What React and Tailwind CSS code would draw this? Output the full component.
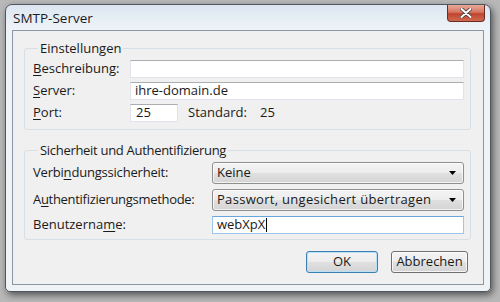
import React from 'react';

const font = { fontFamily: '"Open Sans", "Noto Sans", sans-serif' };

function Key({ children }) {
  return <span className="underline underline-offset-2 decoration-1">{children}</span>;
}

function TextBox({ value, className = '', focused = false }) {
  return (
    <div
      className={`h-[18px] bg-white border flex items-center pl-[4px] text-[13px] ${
        focused
          ? 'border-[#9cc7ec] border-t-[#6aa6dc]'
          : 'border-[#e2e3ea] border-t-[#abadb3]'
      } ${className}`}
    >
      <span>{value}</span>
      {focused && <span className="w-px h-[14px] bg-black ml-[1px]" />}
    </div>
  );
}

function Combo({ value, className = '' }) {
  return (
    <div className="flex-1 h-[22px] rounded-[3px] border border-[#8e8f8f] bg-[linear-gradient(to_bottom,#f4f4f4_0%,#ececec_50%,#e0e0e0_51%,#d4d4d4_100%)] shadow-[inset_0_0_0_1px_rgba(255,255,255,0.7)] flex items-center justify-between pl-[4px] pr-[7px]">
      <span className={className}>{value}</span>
      <svg width="7" height="4" viewBox="0 0 7 4">
        <path d="M0 0 H7 L3.5 4 Z" fill="#000" />
      </svg>
    </div>
  );
}

function Button({ children, primary = false, className = '' }) {
  return (
    <div
      className={`h-[22px] rounded-[3px] border flex items-center justify-center bg-[linear-gradient(to_bottom,#f4f4f4_0%,#ececec_50%,#e0e0e0_51%,#d4d4d4_100%)] ${
        primary
          ? 'border-[#3c7fb1] shadow-[inset_0_0_0_1px_#b9e0f7]'
          : 'border-[#707070] shadow-[inset_0_0_0_1px_rgba(255,255,255,0.75)]'
      } ${className}`}
    >
      {children}
    </div>
  );
}

function Group({ title, children, className = '', titleClass = '' }) {
  return (
    <fieldset className={`border border-[#d5dfe5] rounded-[3px] pl-[8px] pr-[6px] ${className}`}>
      <legend className={`ml-[5px] px-[2px] leading-[16px] ${titleClass}`}>{title}</legend>
      {children}
    </fieldset>
  );
}

export default function App() {
  return (
    <div
      className="w-[500px] h-[302px] overflow-hidden bg-[#b8b8b8] pt-[4px] pl-[5px] text-[13px] text-[#1a1a1a]"
      style={font}
    >
      <div className="w-[486px] h-[288px] rounded-t-[7px] rounded-b-[5px] border border-[#4e5660] bg-[linear-gradient(to_bottom,#dce6f0_0px,#eef3f8_24px,#f0f3f6_100%)] shadow-[2px_3px_7px_rgba(0,0,0,0.55)] flex flex-col">
        {/* Title bar */}
        <div className="h-[25px] flex items-start justify-between">
          <span className="pl-[7px] pt-[5px] leading-[16px] text-[13.5px]">SMTP-Server</span>
          <div className="mr-[5px] w-[38px] h-[17px] rounded-b-[4px] border border-t-0 border-[#6b2a22] bg-[linear-gradient(to_bottom,#e9a99b_0%,#d47560_45%,#c0442f_55%,#cf6a4f_100%)] flex items-center justify-center">
            <svg width="12" height="10" viewBox="0 0 12 10">
              <path
                d="M1.5 1 L10.5 9 M10.5 1 L1.5 9"
                stroke="#4a3a3a"
                strokeWidth="3.6"
                strokeLinecap="round"
              />
              <path
                d="M1.5 1 L10.5 9 M10.5 1 L1.5 9"
                stroke="#fff"
                strokeWidth="2"
                strokeLinecap="round"
              />
            </svg>
          </div>
        </div>

        {/* Client area */}
        <div className="mx-[6px] mb-[6px] flex-1 border border-[#8996a3] bg-[#f0f0f0] flex flex-col pl-[11px] pr-[12px] pt-[9px]">
          <Group title="Einstellungen">
            <div className="flex flex-col gap-[4px] pt-[4px] pb-[7px]">
              <div className="flex items-center h-[18px]">
                <span className="w-[97px]"><Key>B</Key>eschreibung:</span>
                <TextBox value="" className="flex-1" />
              </div>
              <div className="flex items-center h-[18px]">
                <span className="w-[97px]"><Key>S</Key>erver:</span>
                <TextBox value="ihre-domain.de" className="flex-1" />
              </div>
              <div className="flex items-center h-[18px]">
                <span className="w-[97px]"><Key>P</Key>ort:</span>
                <TextBox value="25" className="w-[48px] pl-[5px]" />
                <span className="ml-[10px] w-[72px]">Standard:</span>
                <span>25</span>
              </div>
            </div>
          </Group>

          <Group
            title="Sicherheit und Authentifizierung"
            titleClass="tracking-[-0.3px]"
            className="mt-[12px]"
          >
            <div className="flex flex-col gap-[5px] pt-[4px] pb-[5px]">
              <div className="flex items-center h-[22px]">
                <span className="w-[179px] tracking-[-0.2px]">Verbi<Key>n</Key>dungssicherheit:</span>
                <Combo value="Keine" />
              </div>
              <div className="flex items-center h-[22px]">
                <span className="w-[179px] tracking-[-0.3px]">A<Key>u</Key>thentifizierungsmethode:</span>
                <Combo value="Passwort, ungesichert übertragen" className="tracking-[0.3px]" />
              </div>
              <div className="flex items-center h-[18px]">
                <span className="w-[179px]">Benutzerna<Key>m</Key>e:</span>
                <TextBox value="webXpX" className="flex-1" focused />
              </div>
            </div>
          </Group>

          <div className="flex justify-end gap-[13px] mt-[11px] pr-[3px]">
            <Button primary className="w-[72px]">OK</Button>
            <Button className="w-[77px]">Abbrechen</Button>
          </div>
        </div>
      </div>
    </div>
  );
}
